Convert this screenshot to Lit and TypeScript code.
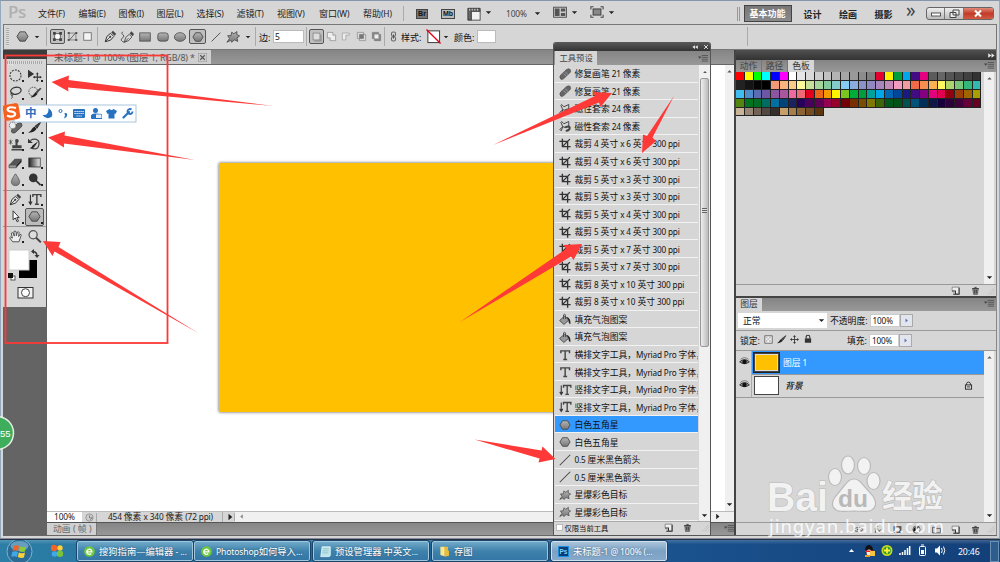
import { LitElement, html, svg, css, nothing } from "lit";
import { customElement, property } from "lit/decorators.js";

const LATIN = /([\x20-\x7e]+)/;
/* Wraps latin runs so they can be set slightly smaller than the Chinese glyphs. */
const mix = (t: string) =>
  t.split(LATIN).filter(Boolean).map((p) => (LATIN.test(p) ? html`<span class="la">${p}</span>` : p));

const shared = css`
  :host { display: block; }
  * { box-sizing: border-box; }
  .la { font-size: .93em; letter-spacing: -0.018em; }
  svg { display: block; flex: none; }
`;

const defs = svg`<defs>
  <linearGradient id="g" x1="0" y1="0" x2="0" y2="1"><stop offset="0" stop-color="#b4b4b4"/><stop offset="1" stop-color="#777"/></linearGradient>
  <linearGradient id="h" x1="0" y1="0" x2="1" y2="0"><stop offset="0" stop-color="#222"/><stop offset="1" stop-color="#eee"/></linearGradient>
</defs>`;

const HEX = svg`<path d="M4.700 2.300H11.300L14.800 8L11.300 13.700H4.700L1.200 8Z" fill="url(#g)" stroke="#4a4a4a" stroke-width="1.200"/>`;
const BLOB = svg`<path d="M1 14L4 9.800L2 6.500L5.800 6.500L6.500 2.500L9 4.300L12.500 1.800L12.300 5.200L15.500 6.800L12.500 9L13.500 13L9.500 11.300L6.500 14L5.500 11.800Z" fill="url(#g)" stroke="#555" stroke-width="1.100"/>`;
const PEN = svg`<path d="M1.500 14.500L3.500 8L8 4L12 8L8 12.500Z" fill="#ddd" stroke="#333" stroke-width="1.200"/><path d="M2 14L7.500 8.500" stroke="#333"/><circle cx="7.700" cy="8.300" r="1.200" fill="#333"/><path d="M9 3L11 1L15 5L13 7Z" fill="#444"/>`;

/* Every glyph is drawn on a 16 by 16 grid. */
const ICONS: Record<string, unknown> = {
  hex: HEX,
  blob: BLOB,
  pen: PEN,
  marquee: svg`<circle cx="8" cy="8" r="6.800" fill="none" stroke="#333" stroke-width="1.300" stroke-dasharray="2.400 1.400"/>`,
  move: svg`<path d="M0 1V11L7.500 6Z" fill="#333"/><path d="M11.500 5.500V14.500M7 10H16" stroke="#333" stroke-width="1.300"/><path d="M11.500 4L13.200 6.500H9.800ZM11.500 16L13.200 13.500H9.800ZM6 10L8.500 8.300V11.700ZM17 10L14.500 8.300V11.700Z" fill="#333"/>`,
  lasso: svg`<ellipse cx="8.500" cy="6" rx="6.500" ry="4.300" fill="none" stroke="#333" stroke-width="1.500" transform="rotate(-12 8 6)"/><circle cx="3.800" cy="10" r="1.500" fill="none" stroke="#333"/><path d="M3.500 11.500Q5 14 3 15.500" fill="none" stroke="#333"/>`,
  quick: svg`<circle cx="6.500" cy="7" r="5.500" fill="none" stroke="#333" stroke-dasharray="2 1.300"/><path d="M15 2L9.500 7L11 9L16.500 3.500Z" fill="#444"/><path d="M9.500 7.500L11.500 9.500Q9 14 3 14Q7 11 9.500 7.500Z" fill="#222"/>`,
  crop: svg`<path d="M4.500 1V11.500H15.500M.5 4.500H11.500V15.500M4.500 11.500L14.500 1.500" fill="none" stroke="#333" stroke-width="1.800"/>`,
  heal: svg`<path d="M2.500 15Q-.5 12 2.500 9L10 2Q13 0 15 2Q16.500 5 14 7L6.500 14Q4.500 15.800 2.500 15Z" fill="#666" stroke="#444" stroke-width=".7"/><path d="M6 7.500L10 11" stroke="#bbb" stroke-width=".8"/><path d="M8.500 5L12 9" stroke="#bbb" stroke-width=".8"/>`,
  spot: svg`<path d="M4 14.500Q1.500 12 4 10L10.500 3Q13.500 1 15.500 3Q17 5.500 14.500 8L8 14Q6 15.500 4 14.500Z" fill="#666" stroke="#333" stroke-width=".8"/><circle cx="4.500" cy="5.500" r="4" fill="#eee" stroke="#444" stroke-dasharray="1.500 1"/>`,
  brush: svg`<path d="M16 1L8.500 6.500L11 9Z" fill="#444" stroke="#222"/><path d="M8 7L10.500 9.500Q8 14.500 0 14.500Q4 12 5 9.500Q6 7.500 8 7Z" fill="#222"/>`,
  stamp: svg`<path d="M7.500 2Q10.500 0 12 3Q12 5 10.500 6V9H15.500V12.500H4V9H8V6Z" fill="#444"/><path d="M3 14.500H16" stroke="#333" stroke-width="1.600"/><path d="M0 3L4 7M4 3L0 7M2 2V8" stroke="#444"/>`,
  history: svg`<path d="M3 3Q8 0 12.500 3Q15 7 12 12Q8 15 4 12" fill="none" stroke="#444" stroke-width="1.500"/><path d="M0 1V6H6Z" fill="#333"/><path d="M12.500 4L7 8L8.500 10ZM6.500 8L8.500 10Q7 13 2 13Q5 11 6.500 8Z" fill="#222"/>`,
  eraser: svg`<path d="M0 11L7 3.500H15.500L9 11Z" fill="#555"/><path d="M0 11H9V14.500H0Z" fill="#999" stroke="#444" stroke-width=".8"/><path d="M9 11L15.500 3.500V7.500L9 14.500Z" fill="#2c2c2c"/>`,
  gradient: svg`<rect x="1" y="2.500" width="14" height="11" fill="url(#h)" stroke="#333"/>`,
  blur: svg`<path d="M8 1Q13 8 13 10.500A5 5 0 0 1 3 10.500Q3 8 8 1Z" fill="url(#g)" stroke="#555"/>`,
  dodge: svg`<circle cx="6.500" cy="6" r="5.300" fill="#333"/><path d="M9.500 9L15.500 15" stroke="#333" stroke-width="2.200"/>`,
  vtext: svg`<path d="M3 2V13M1 10.500L3 14L5 10.500" fill="none" stroke="#333" stroke-width="1.400"/><path d="M6 5V2H15.800V5M10.900 2V13.500M8.500 13.800H13.300" fill="none" stroke="#444" stroke-width="1.800"/>`,
  htext: svg`<path d="M2.500 5.500V2.500H14V5.500M8.200 2.500V13.800M5.700 14H10.800" fill="none" stroke="#444" stroke-width="1.900"/>`,
  select: svg`<path d="M5 1V12L7.700 9.800L10 14.500L11.700 13.700L9.500 9.300H12.500Z" fill="#fff" stroke="#333" stroke-width="1.200"/>`,
  hand: svg`<path d="M4.500 14.500L.8 9.500Q1 7.500 4.200 10L2.800 4Q4 2.500 5.300 4L6.500 7.500L6 2Q7.500 .5 8.700 2L9 7L10.400 2.500Q12 1.500 12.500 3.200L11.800 8L13.700 5.500Q15.300 5 15 6.500L12.300 14.500Z" fill="#eee" stroke="#444" stroke-width="1.100"/>`,
  zoom: svg`<circle cx="6.300" cy="5.800" r="5" fill="#ddd" stroke="#555" stroke-width="1.600"/><path d="M10 9.500L15.800 15.300" stroke="#444" stroke-width="2.400"/>`,
  line: svg`<path d="M1 15L15 1" stroke="#444" stroke-width="1.400"/>`,
  maglasso: svg`<path d="M3.500 2L6.500 5L13 2V8L9 10L5 9L3 14.500L1 12.500L5 9L2.500 3Z" fill="none" stroke="#444" stroke-width="1.300"/><path d="M8 10Q13 7.500 14.300 10Q14.500 14 9 14.500" fill="none" stroke="#444" stroke-width="2.600"/>`,
  bucket: svg`<path d="M.8 10L7.500 4L13 9.500L6.500 15.300Z" fill="#999" stroke="#333"/><path d="M6 8V2.500Q7.500 0 8.700 3V8" fill="none" stroke="#444" stroke-width="1.200"/><path d="M9.500 5Q15.800 6 15.300 14.500Q12.500 14 12.700 9.500Z" fill="#222"/>`,
  shapelayer: svg`<rect x="4" y="4" width="8" height="8" fill="#fff" stroke="#333"/><path d="M1.500 1.500h4v4h-4zM10.500 1.500h4v4h-4zM1.500 10.500h4v4h-4zM10.500 10.500h4v4h-4z" fill="#444"/>`,
  paths: svg`<path d="M3 3H12L4 13H13M3 3V13L13 3V13" fill="none" stroke="#666"/><path d="M1 1.500h3v3h-3zM12 1.500h3v3h-3zM1 11.500h3v3h-3zM12 11.500h3v3h-3z" fill="#555"/>`,
  pixels: svg`<rect x="2.500" y="2.500" width="11" height="11" fill="#f4f4f4" stroke="#777" stroke-width="1.400"/>`,
  freepen: svg`<path d="M5 14L6.500 8.500L10.500 5L13.500 8L10 12Z" fill="#ddd" stroke="#444"/><path d="M11 4L13 1.500L16 4.500L14.500 7Z" fill="#444"/><path d="M5 14L10 9M5 14Q-1 12 3 9Q6 7 3 5Q1 4 3 2" fill="none" stroke="#444"/>`,
  rect: svg`<rect x="1" y="2.500" width="14" height="11" fill="url(#g)" stroke="#444"/>`,
  rrect: svg`<rect x="1" y="2.500" width="14" height="11" rx="3.500" fill="url(#g)" stroke="#444"/>`,
  ellipse: svg`<ellipse cx="8" cy="8" rx="7.500" ry="5.800" fill="url(#g)" stroke="#444"/>`,
  newshape: svg`<rect x="3" y="3" width="10" height="10" fill="#ddd" stroke="#777"/><path d="M5 14.500H14.500V5" fill="none" stroke="#888" stroke-width="1.500"/>`,
  add: svg`<path d="M2 2H10V6H14V14H6V10H2Z" fill="#eee" stroke="#888"/>`,
  sub: svg`<path d="M2 13V3H12V6H7V13Z" fill="#eee" stroke="#999"/>`,
  inter: svg`<path d="M2 2H11V11H2ZM5 5H14V14H5Z" fill="#ddd" stroke="#888"/><rect x="5" y="5" width="6" height="6" fill="#777"/>`,
  excl: svg`<path d="M2 2H11V11H2ZM5 5H14V14H5Z" fill="#888" stroke="#777"/><rect x="5" y="5" width="6" height="6" fill="#eee"/>`,
  link: svg`<rect x="5" y="1.500" width="6" height="6" rx="2.500" fill="none" stroke="#666" stroke-width="1.500"/><rect x="5" y="8.500" width="6" height="6" rx="2.500" fill="none" stroke="#666" stroke-width="1.500"/><path d="M8 5V11" stroke="#555" stroke-width="1.500"/>`,
  none: svg`<rect x="2" y="2" width="12.500" height="12.500" fill="#fff" stroke="#333"/><path d="M.5 .5L15.500 15.500" stroke="#e00012" stroke-width="1.400"/>`,
  extras: svg`<path d="M1 1.500H15V5H5V15H1Z" fill="#666" stroke="#333"/><rect x="5" y="5" width="10" height="10" fill="#f2f2f2" stroke="#444"/><path d="M3 2v2M6 2v2M9 2v2M12 2v2" stroke="#ddd"/>`,
  arrange: svg`<rect x=".7" y="2.500" width="14.600" height="11.500" fill="#ccc" stroke="#444"/><path d="M2 4H7.500V12.500H2ZM9 4H14V7.500H9ZM9 9H14V12.500H9Z" fill="#555"/>`,
  screen: svg`<rect x="3.500" y="4.500" width="9" height="7" fill="#888" stroke="#333"/><path d="M1 5V2H4M12 2H15V5M15 11V14H12M4 14H1V11" fill="none" stroke="#444" stroke-width="1.200"/>`,
  page: svg`<path d="M2 2H14V14H8L2 8.500Z" fill="#eee" stroke="#555"/><path d="M2 9H8V14M14.500 3V14.500H4" fill="none" stroke="#333" stroke-width="1.800"/>`,
  trash: svg`<path d="M3 5L4.500 15H11.500L13 5Z" fill="#888" stroke="#444"/><path d="M2 4.500H14M6 2.500H10M6.500 7V13M9.500 7V13" stroke="#333" stroke-width="1.500"/>`,
  eye: svg`<path d="M1 8.500Q8 2 15 8.500Q8 14 1 8.500Z" fill="#999" stroke="#222" stroke-width="1.300"/><circle cx="8" cy="8.500" r="3.200" fill="#111"/><path d="M2 5Q8 0 14 5" fill="none" stroke="#555"/>`,
  lock: svg`<rect x="3" y="7" width="10" height="7" fill="#333"/><path d="M5 7V5Q5 2 8 2Q11 2 11 5V7" fill="none" stroke="#333" stroke-width="1.700"/>`,
  lock2: svg`<rect x="2.500" y="7" width="11" height="7.500" fill="#ddd" stroke="#222" stroke-width="1.600"/><path d="M4.500 7V5Q4.500 2 8 2Q11.500 2 11.500 5V7M5 10.500H11" fill="none" stroke="#222" stroke-width="1.500"/>`,
  checker: svg`<rect x="1.500" y="1.500" width="13" height="13" fill="#f4f4f4" stroke="#444" stroke-width="1.300"/><path d="M3 3h3v3h-3zM9 3h3v3h-3zM6 6h3v3h-3zM3 9h3v3h-3zM9 9h3v3h-3z" fill="#bbb"/>`,
  cross: svg`<path d="M8 2V14M2 8H14" stroke="#333" stroke-width="1.500"/><path d="M8 0L10.500 3.500H5.500ZM8 16L10.500 12.500H5.500ZM0 8L3.500 5.500V10.500ZM16 8L12.500 5.500V10.500Z" fill="#333"/>`,
  adjust: svg`<circle cx="8" cy="8" r="6.500" fill="#eee" stroke="#222"/><path d="M3.500 12.500A6.500 6.500 0 0 1 12.500 3.500Z" fill="#111"/>`,
  maskic: svg`<rect x="1" y="2" width="14" height="12" fill="#555"/><circle cx="8" cy="8" r="4" fill="#eee"/>`,
  fx: svg`<path d="M9 2Q6 1 5.500 5L4 14M3 7H8M9 8L14 14M14 8L9 14" fill="none" stroke="#444" stroke-width="1.500"/>`,
  folder: svg`<path d="M1 4H6L7.500 6H15V14H1Z" fill="#ccc" stroke="#444" stroke-width="1.400"/>`,
  chain: svg`<path d="M7 5H4A3 3 0 0 0 4 11H7M9 5H12A3 3 0 0 1 12 11H9M5 8H11" fill="none" stroke="#444" stroke-width="1.500"/>`,
  clock: svg`<circle cx="8" cy="8" r="6.500" fill="#ccc" stroke="#888" stroke-width="1.300"/><path d="M8 4V8.500H13L9 12" fill="none" stroke="#777" stroke-width="1.500"/>`,
  menu: svg`<path d="M0 5.500H5.500L2.700 9Z" fill="#444"/><path d="M6 4H16M6 7H16M6 10H16M6 13H16" stroke="#444" stroke-width="1.100"/>`,
  dn: svg`<path d="M2 5H14L8 11.500Z" fill="#222"/>`,
  up: svg`<path d="M3 10.500H13L8 5Z" fill="#555"/>`,
  rt: svg`<path d="M5 1.500L12.500 8L5 14.500Z" fill="#222"/>`,
  rb: svg`<path d="M5 1.500L12.500 8L5 14.500Z" fill="#5570b8"/>`,
  lf: svg`<path d="M11 3L5 8L11 13Z" fill="#888"/>`,
  ll: svg`<path d="M8 3V13L1 8ZM15.500 3V13L8.500 8Z" fill="#e8e8e8"/>`,
  rr: svg`<path d="M8 3V13L15 8ZM.5 3V13L7.500 8Z" fill="#e8e8e8"/>`,
  x: svg`<path d="M3 3L13 13M13 3L3 13" stroke="#eee" stroke-width="2.400"/>`,
  xd: svg`<rect x=".5" y=".5" width="15" height="15" fill="#ccc" stroke="#999"/><path d="M4 4L12 12M12 4L4 12" stroke="#555" stroke-width="2"/>`,
  grip: svg`<path d="M15 2L2 15M15 7L7 15M15 12L12 15" stroke="#999" stroke-width="1.200" stroke-dasharray="2 1.500"/>`,
  ie: svg`<circle cx="8" cy="8" r="7.800" fill="#6cc93c"/><path d="M4 8.500H11.500A3.700 3.700 0 1 0 10.500 11" fill="none" stroke="#fff" stroke-width="2"/>`,
  note: svg`<path d="M3 1H15V14L13 15.500H1Z" fill="#bfe6ea" stroke="#e9f8fa"/><path d="M4 4H13M4 7H12.500M3.500 10H12" stroke="#7ab9c4"/>`,
  dir: svg`<path d="M2 1H8V15L2 13Z" fill="#fbe58a"/><path d="M7 1H13V6L14.500 7V14L8 15.500Z" fill="#e8bc3c"/><path d="M7 2V14" stroke="#fff6c0"/>`,
};

@customElement("ps-icon")
class PsIcon extends LitElement {
  @property() name = "";
  @property({ type: Number }) size = 12;
  static styles = css`:host { display: inline-block; flex: none; line-height: 0; } svg { display: block; overflow: visible; }`;
  render() {
    return html`<svg width=${this.size} height=${this.size} viewBox="0 0 16 16" fill="none">${defs}${ICONS[this.name] ?? nothing}</svg>`;
  }
}
const ic = (name: string, size = 12) => html`<ps-icon name=${name} size=${size}></ps-icon>`;

@customElement("ps-menubar")
class PsMenubar extends LitElement {
  static styles = [shared, css`
    .bar { display: flex; align-items: center; height: 23px; padding-left: 7px; font-size: 9px; color: #222; white-space: nowrap; }
    .logo { width: 30px; font: 600 17px/20px "Open Sans", sans-serif; color: #b0b0b0; letter-spacing: -.5px; padding-bottom: 1px; }
    .m { margin-top: 2px; }
    .sep { width: 1px; height: 15px; background: #aaa; margin: 2px 12px 0 0; }
    .app { width: 12px; height: 10px; background: #777; border: 1px solid #444; color: #111; font: 700 7px/8px "Liberation Sans", sans-serif; text-align: center; margin: 2px 13px 0 0; }
    .app.mb { width: 14px; background: #bbb; margin-right: 12px; }
    ps-icon { margin-top: 2px; }
    .z { margin: 2px 6px 0 14px; width: 22px; color: #444; }
    .gap { margin-left: 12px; }
    .ar { margin-left: 4px; }
    .push { flex: 1; }
    .dbl { width: 3px; height: 14px; border: solid #999; border-width: 0 1px; margin: 2px 4px 0 0; }
    .work { width: 48px; height: 17px; border: 1px solid #444; background: linear-gradient(#777, #8a8a8a); color: #fff; font-weight: 700; line-height: 15px; text-align: center; margin: 2px 12px 0 0; }
    .w { font-weight: 700; width: 18px; margin: 3px 17.500px 0 0; }
    .more { font-size: 19px; width: 12px; margin: -4px 8px 0 -4px; line-height: 17px; color: #444; }
    .win { display: flex; width: 68px; height: 13px; margin: 1px 5px 0 0; border: 1px solid #666; border-radius: 3px; overflow: hidden; background: linear-gradient(#eee, #bcbcbc); }
    .win svg { border-right: 1px solid #777; }
    .win .c { background: linear-gradient(#e08a78, #c23c28 50%, #d35a42); border: 0; }
  `];
  render() {
    const menus: [string, number][] = [["文件(F)", 40.5], ["编辑(E)", 40], ["图像(I)", 38], ["图层(L)", 40], ["选择(S)", 40], ["滤镜(T)", 40.5], ["视图(V)", 42], ["窗口(W)", 44], ["帮助(H)", 40]];
    return html`<div class="bar">
      <div class="logo">Ps</div>
      ${menus.map(([t, w]) => html`<div class="m" style="width:${w}px">${mix(t)}</div>`)}
      <div class="sep"></div>
      <div class="app">Br</div><div class="app mb">Mb</div>
      ${ic("extras", 14)}<span class="ar">${ic("dn", 7)}</span>
      <div class="z">${mix("100%")}</div>${ic("dn", 7)}
      <span class="gap">${ic("arrange", 14)}</span><span class="ar">${ic("dn", 7)}</span>
      <span class="gap">${ic("screen", 14)}</span><span class="ar">${ic("dn", 7)}</span>
      <div class="push"></div>
      <div class="dbl"></div><div class="work">基本功能</div>
      <div class="w">设计</div><div class="w">绘画</div><div class="w">摄影</div>
      <div class="more">»</div>
      <div class="win">
        <svg width="18" height="11"><rect x="4.500" y="5" width="9" height="3" fill="#fff" stroke="#555"/></svg>
        <svg width="19" height="11"><path d="M8 2H14V7H8ZM5 4.500H11V9.500H5Z" fill="#eee" stroke="#444"/></svg>
        <svg class="c" width="30" height="11"><path d="M11 2.500L17 8.500M17 2.500L11 8.500" stroke="#fff" stroke-width="2"/></svg>
      </div>
    </div>`;
  }
}

@customElement("ps-options")
class PsOptions extends LitElement {
  static styles = [shared, css`
    .bar { display: flex; align-items: center; height: 26px; margin: 0 2px 0 2px; border: 1px solid #777; font-size: 9px; color: #111; padding-bottom: 1px; }
    .cell { display: flex; justify-content: center; align-items: center; height: 15px; flex: none; }
    .on { border: 1px solid #555; border-radius: 2px; background: #c0c0c0; }
    .sep { width: 1px; height: 19px; background: #aaa; }
    .grip { width: 3px; height: 18px; background: repeating-linear-gradient(#aaa 0 1px, #ddd 1px 2px); }
    .in { background: #fff; height: 13px; border: 1px solid #bbb; line-height: 12px; padding-left: 1px; font-size: 8.500px; }
    .txt { white-space: nowrap; padding-top: 1px; }
  `];
  cell(name: string, w: number, size = 12, on = false) {
    return html`<div class="cell ${on ? "on" : ""}" style="width:${w}px">${ic(name, size)}</div>`;
  }
  sp(w: number) { return html`<div style="width:${w}px"></div>`; }
  render() {
    const sep = html`<div class="sep"></div>`;
    return html`<div class="bar">
      ${this.sp(2)}<div class="grip"></div>${this.sp(6)}
      ${this.cell("hex", 14, 13)}${this.sp(4)}${this.cell("dn", 8, 6)}${this.sp(5)}${sep}${this.sp(3)}
      ${this.cell("shapelayer", 15, 11, true)}${this.cell("paths", 14, 11)}${this.sp(1)}${this.cell("pixels", 14, 11)}${this.sp(3)}${sep}
      ${this.sp(4)}${this.cell("pen", 16, 13)}${this.cell("freepen", 18, 14)}${this.cell("rect", 18, 12)}${this.cell("rrect", 17, 12)}
      ${this.cell("ellipse", 18, 12)}${this.cell("hex", 17, 12, true)}${this.cell("line", 19, 10)}${this.cell("blob", 16, 14)}${this.cell("dn", 13, 6)}
      ${this.sp(1)}${sep}${this.sp(3)}<div class="txt" style="width:14px">边:</div>
      <div class="in" style="width:31px">5</div>${this.sp(2)}${sep}${this.sp(2)}
      ${this.cell("newshape", 15, 11, true)}${this.cell("add", 15, 11)}${this.cell("sub", 15, 11)}${this.cell("inter", 15, 11)}${this.cell("excl", 14, 11)}
      ${this.sp(1)}${sep}${this.sp(2)}${this.cell("link", 12, 11)}${this.sp(2)}<div class="txt" style="width:25px">样式:</div>
      ${this.cell("none", 15, 15)}${this.cell("dn", 10, 6)}${this.sp(3)}<div class="txt" style="width:23px">颜色:</div>
      <div class="in" style="width:19px"></div>${this.sp(251)}${sep}
    </div>`;
  }
}

@customElement("ps-toolbox")
class PsToolbox extends LitElement {
  static styles = [shared, css`
    :host { width: 44px; background: #646464; flex: none; }
    .head { height: 9px; background: #3c3c3c; padding-left: 3px; }
    .body { height: 248px; background: #d6d6d6; border-right: 1px solid #555; }
    .grip { height: 3px; margin: 0 4px; position: relative; top: 2px; background: repeating-linear-gradient(90deg, #aaa 0 1px, #ddd 1px 2px); }
    .grp { display: grid; grid-template-columns: 19px 19px; grid-auto-rows: 17.300px; padding: 0 0 0 3px; }
    .first { padding-top: 5px; height: 128px; }
    .second { border-top: 1px solid #999; height: 36px; }
    .third { border-top: 1px solid #999; height: 21px; padding-top: 1px; }
    .t { display: flex; align-items: center; justify-content: center; border: 1px solid transparent; background: linear-gradient(#222, #222) right 0 bottom 1px / 2px 2px no-repeat; }
    .t.on { border-color: #555; border-radius: 2px; background-color: #bbb; }
    .t.z { background: none; }
  `];
  render() {
    const t = (n: string, c = "") => html`<div class="t ${c}">${ic(n, 13)}</div>`;
    return html`<div class="head">${ic("ll", 7)}</div>
      <div class="body">
        <div class="grip"></div>
        <div class="grp first">${["marquee", "move", "lasso", "quick", "crop", "pen", "spot", "brush", "stamp", "history", "eraser", "gradient", "blur", "dodge"].map((n) => t(n))}</div>
        <div class="grp second">${t("pen")}${t("vtext")}${t("select")}${t("hex", "on")}</div>
        <div class="grp third">${t("hand")}${t("zoom", "z")}</div>
        <svg width="43" height="58" viewBox="0 -2 43 58" fill="none">
          <rect x="16" y="11" width="18" height="18" fill="#000"/><rect x="6" y="1" width="20" height="20" fill="#fff" stroke="#ccc"/>
          <path d="M30 2.500Q34 3 34 7" stroke="#333" stroke-width="1.300"/><path d="M28 2.500L31 0V5ZM34 9L31.500 6H36.500Z" fill="#333"/>
          <rect x="8" y="27" width="4" height="4" fill="#fff" stroke="#555"/><rect x="5" y="24" width="5" height="5" fill="#111"/>
          <rect x="15" y="38.500" width="15" height="10.500" fill="#f2f2f2" stroke="#333"/><circle cx="22.500" cy="43.700" r="4" fill="#fff" stroke="#444"/>
        </svg>
      </div>`;
  }
}

@customElement("ps-document")
class PsDocument extends LitElement {
  static styles = [shared, css`
    :host { display: flex; flex-direction: column; flex: 1; min-width: 0; font-size: 9px; color: #333; }
    .tabs { height: 15px; background: linear-gradient(#858585, #989898); border-bottom: 1px solid #666; display: flex; flex: none; }
    .tab { width: 164px; background: #cfcfcf; display: flex; align-items: center; padding-left: 7px; white-space: nowrap; color: #555; }
    .tab span.n { width: 144px; font-size: 9.600px; }
    .mid { flex: 1; display: flex; background: #fff; min-height: 0; }
    .work { flex: 1; padding: 98px 0 0 172px; }
    .art { width: 400px; height: 249px; background: #ffc000; box-shadow: 0 0 3px #555; }
    .vs { width: 9px; background: #f0f0f0; display: flex; flex-direction: column; justify-content: space-between; align-items: center; padding: 3px 0; }
    .status { height: 11px; display: flex; align-items: center; background: #d6d6d6; border-top: 1px solid #bbb; color: #222; line-height: 10px; white-space: nowrap; flex: none; }
    .pct { width: 35px; background: #fff; padding-left: 7px; }
    .ck { width: 15px; display: flex; justify-content: center; border-right: 1px solid #aaa; }
    .info { width: 126px; padding-left: 11px; border-right: 1px solid #aaa; font-size: 8.900px; }
    .rt { width: 12px; padding-left: 3px; border-right: 1px solid #aaa; height: 8px; }
    .hs { flex: 1; background: #f0f0f0; height: 10px; display: flex; justify-content: space-between; padding: 1px 13px 0 3px; }
    .anim { height: 13px; background: linear-gradient(#858585, #989898); border-top: 1px solid #555; display: flex; justify-content: space-between; flex: none; }
    .at { width: 50px; background: #d0d0d0; color: #666; line-height: 12px; padding-left: 6px; font-size: 8.800px; border-right: 1px solid #777; white-space: nowrap; }
  `];
  render() {
    return html`<div class="tabs"><div class="tab"><span class="n">${mix("未标题-1 @ 100% (图层 1, RGB/8) *")}</span>${ic("xd", 9)}</div></div>
      <div class="mid"><div class="work"><div class="art"></div></div><div class="vs">${ic("up", 7)}${ic("dn", 7)}</div></div>
      <div class="status"><div class="pct">${mix("100%")}</div><div class="ck">${ic("clock", 9)}</div>
        <div class="info">${mix("454 像素 x 340 像素 (72 ppi)")}</div><div class="rt">${ic("rt", 8)}</div><div class="hs">${ic("lf", 7)}${ic("rt", 7)}</div></div>
      <div class="anim"><div class="at">动画 ( 帧 )</div>${ic("menu", 10)}</div>`;
  }
}

const SWATCHES = [
  "f00 ff0 0f0 0ff 00f f0f fff e6e6e6 d9d9d9 ccc c0c0c0 b3b3b3 a6a6a6 999 8c8c8c 808080 e6002d fff100 009e3e 00a7ea 420c84 e5007f 5c5c5c 666 555 4a4a4a 404040 333",
  "222 141414 050505 000 f59a76 f8b37f fccb88 fff799 c6e09a a5d59c 83cb9d 82ccc9 86ccf0 8aabdb 8b92c9 9288c1 a985bd c38ab9 f29ac0 f39a9f f26a48 f58e50 f9b152 fff65f acd56b 7ac678 33b679 32b8b1",
  "40bcf0 4f8ccb 5b6cb3 6c56a5 8a56a2 a9569f ee68a3 ef6a76 e2001f ec661a f29b00 fff100 7cc41f 00ab38 009d3c 00a198 00a6e8 0067b5 00479c 1a1a84 410c82 850081 e4007d e3004e 92000f 9c3e08 a06500 a8a000",
  "52850f 00731e 006c24 006c62 0070a0 004378 1a2360 26005a 48005a 600055 960050 97002b 720006 782f00 7a4b00 807800 3c6408 00581a 005218 00524e 005278 002f57 0f1744 15003b 2c0038 40003a 640037 670020",
  "c9b596 998674 736357 534741 362e2b c6a06a a67e4c 8c6434 744d22 5c3710",
];

@customElement("ps-panels")
class PsPanels extends LitElement {
  static styles = [shared, css`
    :host { display: flex; flex-direction: column; width: 263px; flex: none; border-left: 2px solid #444; border-right: 1px solid #888; font-size: 8.800px; color: #111; background: #d6d6d6; }
    .head { height: 10px; background: linear-gradient(#505050, #333); display: flex; justify-content: flex-end; align-items: center; padding-right: 1px; flex: none; }
    .tabs { height: 12px; display: flex; background: linear-gradient(#858585, #989898); line-height: 12px; color: #444; padding-right: 2px; flex: none; }
    .tabs div { width: 26px; text-align: center; border-right: 1px solid #777; }
    .tabs div.on { background: #d6d6d6; color: #333; border: 0; }
    .tabs span { margin-left: auto; }
    .tabs.b { height: 13px; }
    .sw { height: 212px; display: flex; flex: none; }
    .cols { flex: 1; }
    .r { display: flex; height: 8.900px; }
    .r i { width: 8.780px; height: 8.900px; border: solid #222; border-width: 0 1px 1px 0; }
    .vs { width: 10px; background: #f0f0f0; display: flex; flex-direction: column; justify-content: space-between; align-items: center; padding: 3px 0; margin-right: 2px; }
    .foot { height: 13px; border-top: 1px solid #999; display: flex; justify-content: flex-end; align-items: center; gap: 10.500px; flex: none; }
    .foot ps-icon:last-child { margin-left: -3px; margin-right: 1px; }
    .foot.a { height: 14px; border-bottom: 2px solid #444; }
    .ctl { display: flex; align-items: center; border-bottom: 1px solid #999; padding-left: 2px; flex: none; white-space: nowrap; height: 20px; }
    .mode { width: 89px; height: 15px; background: #fff; display: flex; align-items: center; justify-content: space-between; padding: 0 2px 0 5px; margin-right: 3px; }
    .num { width: 30px; height: 13px; background: #fff; border: 1px solid #ccc; line-height: 11px; padding-left: 2px; margin-left: 2px; }
    .btn { width: 13px; height: 13px; border: 1px solid #aaa; background: #e2e5ec; display: flex; align-items: center; justify-content: center; }
    .lay { flex: 1; display: flex; min-height: 0; }
    .list { flex: 1; }
    .row { height: 23.500px; display: flex; align-items: center; border-bottom: 1px solid #999; }
    .eye { width: 16px; height: 23px; border-right: 1px solid #aaa; padding: 5px 0 0 3px; background: #d6d6d6; }
    .th { width: 25px; height: 19px; border: 1px solid #444; background: #fff; margin: 0 4px 0 2px; }
    .th.y { background: #ffc000; outline: 1px solid #222; box-shadow: 0 0 0 1px #ddd inset; }
    .sel { background: #3399ff; color: #fff; }
    .it { font-style: italic; font-weight: 500; flex: 1; padding-left: 2px; }
    .row > ps-icon { margin-right: 11px; }
    .k { margin-left: 4px; } .k1 { margin-left: 2px; } .fill { margin-left: 34px; }
  `];
  render() {
    return html`<div class="head">${ic("rr", 7)}</div>
      <div class="tabs"><div>动作</div><div>路径</div><div class="on">色板</div><span>${ic("menu", 10)}</span></div>
      <div class="sw"><div class="cols">${SWATCHES.map((r) => html`<div class="r">${r.split(" ").map((c) => html`<i style="background:#${c}"></i>`)}</div>`)}</div>
        <div class="vs">${ic("up", 7)}${ic("dn", 7)}</div></div>
      <div class="foot a">${ic("page", 9)}${ic("trash", 9)}${ic("grip", 8)}</div>
      <div class="tabs b"><div class="on">图层</div><span>${ic("menu", 10)}</span></div>
      <div class="ctl"><div class="mode">正常${ic("dn", 7)}</div>不透明度:<div class="num">${mix("100%")}</div><div class="btn">${ic("rb", 5)}</div></div>
      <div class="ctl"><span class="k1">锁定:</span><span class="k">${ic("checker", 9)}</span><span class="k">${ic("brush", 9)}</span><span class="k">${ic("cross", 9)}</span><span class="k">${ic("lock", 10)}</span>
        <span class="fill">填充:</span><div class="num">${mix("100%")}</div><div class="btn">${ic("rb", 5)}</div></div>
      <div class="lay"><div class="list">
          <div class="row sel"><div class="eye">${ic("eye", 11)}</div><div class="th y"></div><span>${mix("图层 1")}</span></div>
          <div class="row"><div class="eye">${ic("eye", 11)}</div><div class="th"></div><span class="it">背景</span>${ic("lock2", 9)}</div>
        </div><div class="vs">${ic("up", 7)}${ic("dn", 7)}</div></div>
      <div class="foot">${["chain", "fx", "maskic", "adjust", "folder", "page", "trash"].map((n) => ic(n, 9))}${ic("grip", 8)}</div>`;
  }
}

@customElement("ps-presets")
class PsPresets extends LitElement {
  static styles = [shared, css`
    :host { display: flex; flex-direction: column; background: #d6d6d6; border: 1px solid #555; border-width: 0 1px 1px 1px; border-radius: 3px 3px 0 0; overflow: hidden; font-size: 8.800px; color: #111; }
    .head { height: 9px; background: linear-gradient(#5a5a5a, #333); display: flex; justify-content: flex-end; align-items: center; gap: 5px; padding-right: 1px; flex: none; }
    .tabs { height: 14px; display: flex; justify-content: space-between; background: linear-gradient(#858585, #989898); flex: none; padding: 0 2px 0 1px; line-height: 14px; }
    .tabs div { background: #d6d6d6; width: 42px; padding-left: 5px; color: #444; font-size: 8.300px; }
    .tabs ps-icon { margin-top: 2px; }
    .mid { flex: 1; display: flex; min-height: 0; }
    .list { flex: 1; overflow: hidden; min-width: 0; padding-left: 1px; }
    .row { height: 17.560px; display: flex; align-items: center; gap: 4px; padding: 1px 0 0 4px; white-space: nowrap; border-bottom: 1px solid #f2f2f2; overflow: hidden; }
    .sel { background: #3399ff; }
    .vs { width: 11px; background: #f0f0f0; display: flex; flex-direction: column; align-items: center; padding: 4px 0 2px; margin-left: 1px; }
    .thumb { width: 9px; height: 269px; border: 1px solid #999; border-radius: 2px; background: linear-gradient(90deg, #eee, #bbb); margin: 3px 0 auto; padding-top: 129px; }
    .thumb i { display: block; height: 5px; margin: 0 1px; background: repeating-linear-gradient(#666 0 1px, #ddd 1px 2px); }
    .foot { height: 14px; border-top: 1px solid #aaa; display: flex; align-items: center; font-size: 7.300px; gap: 2px; padding: 0 1px 2px 2px; flex: none; white-space: nowrap; }
    .cb { width: 7px; height: 7px; background: #fff; border: 1px solid #bbb; }
    .foot span { flex: 1; } .foot ps-icon { margin-left: 8px; }
    .foot ps-icon:last-child { margin-left: 7px; }
  `];
  render() {
    const twice = (n: string, t: string) => [[n, t], [n, t]];
    const rows = [
      ...twice("heal", "修复画笔 21 像素"), ...twice("maglasso", "磁性套索 24 像素"), ...twice("crop", "裁剪 4 英寸 x 6 英寸 300 ppi"),
      ...twice("crop", "裁剪 5 英寸 x 3 英寸 300 ppi"), ...twice("crop", "裁剪 5 英寸 x 4 英寸 300 ppi"), ...twice("crop", "裁剪 5 英寸 x 7 英寸 300 ppi"),
      ...twice("crop", "裁剪 8 英寸 x 10 英寸 300 ppi"), ...twice("bucket", "填充气泡图案"), ...twice("htext", "横排文字工具，Myriad Pro 字体，"),
      ...twice("vtext", "竖排文字工具，Myriad Pro 字体，"), ...twice("hex", "白色五角星"), ...twice("line", "0.5 厘米黑色箭头"), ...twice("blob", "星爆彩色目标"),
    ];
    return html`<div class="head">${ic("ll", 6)}${ic("x", 6)}</div>
      <div class="tabs"><div>工具预设</div>${ic("menu", 10)}</div>
      <div class="mid"><div class="list">${rows.map(([n, t], i) => html`<div class="row ${i === 20 ? "sel" : ""}">${ic(n, 12)}<span>${mix(t)}</span></div>`)}</div>
        <div class="vs">${ic("up", 6)}<div class="thumb"><i></i></div>${ic("dn", 7)}</div></div>
      <div class="foot"><div class="cb"></div><span>仅限当前工具</span>${ic("page", 9)}${ic("trash", 9)}${ic("grip", 8)}</div>`;
  }
}

@customElement("win-taskbar")
class WinTaskbar extends LitElement {
  static styles = [shared, css`
    .bar { height: 23px; display: flex; align-items: center; background: linear-gradient(#ffffff30, #ffffff00 20%), linear-gradient(90deg, #2c7ea6, #226a9c 35%, #1a5490 65%, #143f78); color: #fff; font-size: 9.300px; padding-left: 6px; border-top: 1px solid #234; }
    .ql { margin: 0 6px 0 15px; width: 23px; }
    .b { width: 116px; height: 20px; border: 1px solid #9fc6dc; border-radius: 2px; display: flex; align-items: center; gap: 4px; padding-left: 6px; margin-right: 3px; background: linear-gradient(#6fa9c8, #3f82ac 50%, #3576a5); white-space: nowrap; outline: 1px solid #1a4468; text-shadow: 0 0 2px #0006; }
    .b.j { margin-right: 1px; }
    .b.act { background: linear-gradient(#aac4da, #7ba1c4 50%, #86a9ca); border-color: #cfe0ee; }
    .ps { width: 11px; height: 11px; background: #0a3f78; border: 1px solid #1c8fe0; font: 700 6.500px/9px "Liberation Sans", sans-serif; color: #8ad2ff; text-align: center; }
    .tray { margin-left: auto; display: flex; align-items: center; }
    .time { margin: 0 8px 0 12px; width: 24px; font-size: 9.400px; }
    .desk { width: 9px; height: 21px; border: 1px solid #6a90b4; background: #2d5d8e; margin-right: 1px; }
  `];
  render() {
    const b = (i: unknown, t: string, c = "") => html`<div class="b ${c}">${i}<span>${mix(t)}</span></div>`;
    return html`<div class="bar">
      <svg width="27" height="23" viewBox="0 0 27 23"><circle cx="13.500" cy="11.500" r="12.500" fill="#2b6a94" stroke="#7fb4cf"/><ellipse cx="13.500" cy="6" rx="9" ry="5" fill="#8fc0d8" opacity=".6"/>
        <path d="M7.500 6.500Q10 4.500 13 6L12 11Q9 9.500 6.500 11Z" fill="#f0642a"/><path d="M14 6.500Q17 8 20 6.500L19 11.500Q16 12.500 13 11Z" fill="#8fc93a"/><path d="M6.200 12Q9 10.500 12 12L11 17Q8 15.500 5.200 17Z" fill="#3fa9e8"/><path d="M12.800 12.500Q16 14 19 12.500L18 17.500Q15 18.500 11.800 17Z" fill="#fcd03a"/></svg>
      <svg class="ql" width="14" height="14" viewBox="-2 0 23 14"><circle cx="4" cy="4" r="3.200" fill="#f0642a"/><circle cx="10" cy="4" r="2.700" fill="#fcd03a"/><circle cx="4.500" cy="10" r="2.800" fill="#3fa9e8"/><circle cx="10" cy="9.700" r="3.200" fill="#7ac23a"/></svg>
      ${b(ic("ie", 11), "搜狗指南—编辑器 - ...", "j")}${b(ic("ie", 11), "Photoshop如何导入...")}${b(ic("note", 11), "预设管理器 中英文...")}${b(ic("dir", 11), "存图")}${b(html`<div class="ps">Ps</div>`, "未标题-1 @ 100% (...", "act")}
      <div class="tray">
        <svg width="98" height="14" viewBox="846 545 98 14" fill="none">
          <path d="M847 553L849.500 550L852 553Z" fill="#fff"/>
          <ellipse cx="867" cy="551" rx="4" ry="5" fill="#111"/><ellipse cx="867" cy="553.500" rx="2.500" ry="3" fill="#eee"/><path d="M863 551.500H871V553H863Z" fill="#e22"/><rect x="868" y="552" width="5" height="5" fill="#f5c542"/><path d="M863 557H868" stroke="#f59a20" stroke-width="2"/>
          <circle cx="885" cy="551.500" r="5.500" fill="#c8dc1e"/><circle cx="885" cy="551.500" r="3.800" fill="#2e9a2e"/><path d="M885 548.500V554.500M882 551.500H888" stroke="#ffef3a" stroke-width="1.800"/>
          <path d="M898 556V554M900.500 556V553M903 556V551M905.500 556V549M907.700 556V547" stroke="#fff" stroke-width="1.500"/>
          <rect x="917.500" y="547.500" width="6" height="9" rx="1" stroke="#fff"/><path d="M919 546H922" stroke="#fff"/><rect x="919" y="551" width="3" height="4" fill="#fff"/>
          <path d="M933 549.500H935L938 546.500V556.500L935 553.500H933Z" fill="#fff"/><path d="M939.500 549Q941 551.500 939.500 554M941.500 547.500Q944 551.500 941.500 555.500" stroke="#fff"/>
        </svg>
        <div class="time">${mix("20:46")}</div><div class="desk"></div>
      </div>
    </div>`;
  }
}

@customElement("app-root")
class AppRoot extends LitElement {
  static styles = [shared, css`
    :host { position: relative; width: 1000px; height: 562px; overflow: hidden; font-family: "Noto Sans", "Noto Sans CJK SC", sans-serif; background: #d6d6d6; }
    .win { height: 539px; display: flex; flex-direction: column; border-top: 1px solid #8495ac; border-left: 1px solid #93a9bd; border-right: 1px solid #93a9bd; border-bottom: 1px solid #889; }
    .main { flex: 1; display: flex; min-height: 0; margin: 0 2px 2px 2px; border-bottom: 1px solid #666; }
    .float { position: absolute; left: 552.500px; top: 42px; width: 158.500px; height: 494px; display: flex; }
    .ime { position: absolute; left: 3px; top: 102px; }
    .clock { position: absolute; left: 0; top: 414px; }
    .over { position: absolute; inset: 0; }
  `];
  render() {
    return html`
      <div class="win"><ps-menubar></ps-menubar><ps-options></ps-options>
        <div class="main"><ps-toolbox></ps-toolbox><ps-document></ps-document><ps-panels></ps-panels></div></div>
      <win-taskbar></win-taskbar>
      <ps-presets class="float"></ps-presets>
      <svg class="over" width="1000" height="562" fill="none">
        <g fill="#f4f4f4" stroke="#b9b9b9" stroke-width="1.200" opacity=".95">
          <text x="767" y="510.500" font-family="Liberation Sans" font-weight="700" font-size="40" textLength="61" lengthAdjust="spacingAndGlyphs" paint-order="stroke">Bai</text>
          <ellipse cx="835" cy="477" rx="6.500" ry="8.500"/><ellipse cx="848" cy="465" rx="6.500" ry="9"/><ellipse cx="864" cy="466" rx="6.500" ry="8.500"/><ellipse cx="873.500" cy="481" rx="6.500" ry="8.500"/>
          <path d="M854 479Q859 479 863 485L873 496Q879 506 871 510.500Q867 512 854 511Q841 512 837 510.500Q829 506 835 497L845 485Q849 479 854 479Z"/>
          <text x="882" y="507" font-family="Noto Sans CJK SC" font-weight="700" font-size="31" textLength="61" paint-order="stroke">经验</text>
        </g>
        <text x="838" y="506.500" font-family="Liberation Sans" font-weight="700" font-size="24" fill="#b9b9b9" textLength="30" lengthAdjust="spacingAndGlyphs">du</text>
        <text x="769" y="533" font-family="Noto Sans" font-size="18.500" fill="#fff" fill-opacity=".85" textLength="175">jingyan.baidu.com</text>
      </svg>
      <svg class="clock" width="15" height="38" viewBox="0 414 15 38">
        <circle cx="-3" cy="433" r="16.500" fill="#3fae5c" stroke="#e4efe6" stroke-width="1.500"/>
        <text x="0" y="436.500" font-family="Liberation Sans" font-size="9.500" fill="#fff">55</text>
      </svg>
      <svg class="over" width="1000" height="562" fill="none">
        <rect x="5.500" y="55.500" width="162" height="287.500" stroke="#fb3937" stroke-width="1.800"/>
        <g fill="#fd3a38">
          <path d="M51.500 82L69 75.500L68.500 80L273 106L68 87.500L68.500 91.500Z"/>
          <path d="M48 137.500L65 131.500L64.500 135.500L195 160L64 143.500L64 147.500Z"/>
          <path d="M43 241L60.500 242L58.500 247L199 333.500L54.500 251.500L52.500 256Z"/>
          <path d="M612 93L593 92L595 96L493 145L599 102.500L600.500 107Z"/>
          <path d="M674 96L652.500 137.500L656 141L642 153L643 134.500L647 136Z"/>
          <path d="M582 244L563.500 245L566 249L460 322L571 256.500L573.500 260Z"/>
          <path d="M555.500 459L538.500 462.500L539.500 458.500L474.500 439.500L541.500 450.500L542.500 446.500Z"/>
        </g>
      </svg>
      <svg class="ime" width="134" height="21" viewBox="3 102 134 21" fill="none">
        <rect x="14" y="105" width="122" height="17" fill="#fdfeff" stroke="#a9c6de"/>
        <rect x="3.500" y="104" width="16" height="16" rx="3" transform="rotate(-10 11 112)" fill="#f5601e"/>
        <path d="M16 108Q8 106 7.500 109.500Q8 111.500 12 111.700Q16 112.500 15 115Q12 118 7 115.500" stroke="#fff" stroke-width="2.200"/>
        <text x="25" y="117.300" font-family="Noto Sans CJK SC" font-weight="700" font-size="11.500" fill="#2672c0">中</text>
        <g fill="#2672c0" stroke="none"><path d="M48.500 108Q54 112 51.500 117Q46 120 42.500 115Q49 116 48.500 108Z"/><path d="M64.500 113Q68.500 112.500 66.500 117L64 118.500L65 115.500Z"/><circle cx="60.500" cy="111" r="1.500" fill="none" stroke="#2672c0"/>
          <rect x="73" y="109" width="12" height="9" rx="1"/><path d="M74.500 111.500H84M74.500 113.500H84M76.500 116H82" stroke="#fff" stroke-dasharray="1.200 .8"/>
          <circle cx="95.500" cy="110.500" r="2.500"/><path d="M91 118.500V115.500Q92 113 96 113.500L102 114V119H92Z"/><path d="M96 114.500H101.500V118H96Z" fill="#e6f0fa"/>
          <path d="M109.500 109Q111.500 111 113.500 109L117 111L115.500 114L114.500 113.500V118.500H108.500V113.500L107.500 114L106 111Z"/></g>
        <path d="M123.500 117.500L129 112" stroke="#2672c0" stroke-width="2.200" stroke-linecap="round"/><path d="M131.500 109.500A2.500 2.500 0 1 0 132.500 111.500" stroke="#2672c0" stroke-width="1.800"/>
      </svg>`;
  }
}
